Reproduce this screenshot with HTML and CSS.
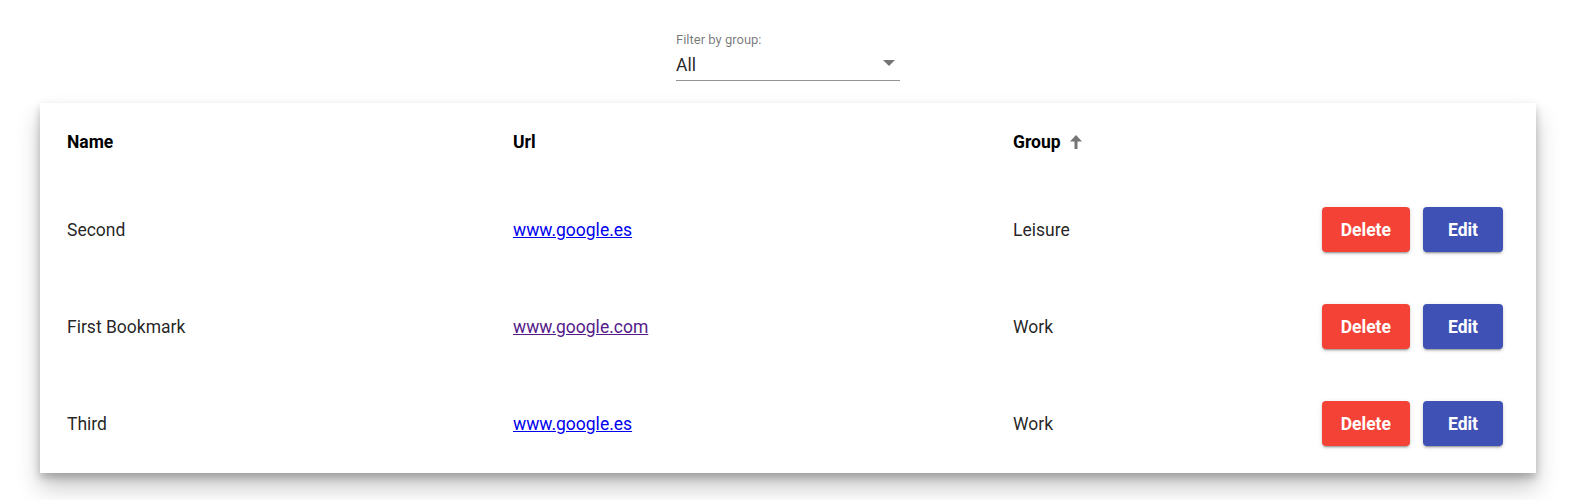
FILE: index.html
```html
<!DOCTYPE html>
<html>
<head>
<meta charset="utf-8">
<link rel="stylesheet" href="styles.css">
</head>
<body>
<div class="page">
  <div class="filter">
    <div class="filter-label">Filter by group:</div>
    <div class="filter-field">
      <span class="filter-value">All</span>
      <span class="filter-arrow"></span>
    </div>
  </div>
  <div class="card">
    <div class="row head">
      <div class="cell">Name</div>
      <div class="cell">Url</div>
      <div class="cell">Group
        <svg class="sort" viewBox="0 0 12 14" width="12" height="14"><polygon points="6,0 12,6.5 0,6.5"/><rect x="4.5" y="5" width="3" height="9"/></svg>
      </div>
      <div class="cell"></div>
    </div>
    <div class="row">
      <div class="cell">Second</div>
      <div class="cell"><a class="link" href="#">www.google.es</a></div>
      <div class="cell">Leisure</div>
      <div class="cell actions"><button class="btn del">Delete</button><button class="btn edit">Edit</button></div>
    </div>
    <div class="row">
      <div class="cell">First Bookmark</div>
      <div class="cell"><a class="link visited" href="#">www.google.com</a></div>
      <div class="cell">Work</div>
      <div class="cell actions"><button class="btn del">Delete</button><button class="btn edit">Edit</button></div>
    </div>
    <div class="row">
      <div class="cell">Third</div>
      <div class="cell"><a class="link" href="#">www.google.es</a></div>
      <div class="cell">Work</div>
      <div class="cell actions"><button class="btn del">Delete</button><button class="btn edit">Edit</button></div>
    </div>
  </div>
</div>
</body>
</html>
```
FILE: styles.css
```css
html, body {
  margin: 0;
  padding: 0;
  background: #fff;
  font-family: Roboto, "Liberation Sans", sans-serif;
}
.page {
  padding: 32px 45px 27px 40px;
  display: flex;
  flex-direction: column;
  align-items: center;
}
.filter {
  width: 224px;
  display: flex;
  flex-direction: column;
}
.filter-label {
  font-size: 13px;
  line-height: 16px;
  color: rgba(0,0,0,0.54);
}
.filter-field {
  margin-top: 6px;
  height: 26px;
  border-bottom: 1px solid rgba(0,0,0,0.42);
  display: flex;
  align-items: flex-start;
  justify-content: space-between;
}
.filter-value {
  font-size: 17.5px;
  line-height: 22px;
  color: rgba(0,0,0,0.87);
}
.filter-arrow {
  width: 0;
  height: 0;
  border-left: 6px solid transparent;
  border-right: 6px solid transparent;
  border-top: 6px solid rgba(0,0,0,0.54);
  margin: 6px 5px 0 0;
}
.card {
  align-self: stretch;
  margin-top: 22px;
  background: #fff;
  padding-bottom: 1px;
  box-shadow: 0 14px 22px rgba(0,0,0,0.22), 0 5px 8px rgba(0,0,0,0.22);
}
.row {
  display: grid;
  grid-template-columns: 446px 500px 1fr auto;
  align-items: center;
  height: 97px;
  padding: 0 33px 0 27px;
  font-size: 17.5px;
  color: rgba(0,0,0,0.87);
}
.row.head {
  height: 78px;
  font-weight: 700;
  color: #000;
}
.cell {
  display: flex;
  align-items: center;
}
.sort {
  fill: #757575;
  margin-left: 9px;
}
.link {
  color: #0000ee;
  text-decoration: underline;
}
.link.visited {
  color: #551a8b;
}
.actions {
  display: flex;
  gap: 13px;
}
.btn {
  height: 45px;
  min-width: 80px;
  padding: 0 19px;
  border: none;
  border-radius: 4px;
  color: #fff;
  font-family: Roboto, "Liberation Sans", sans-serif;
  font-size: 17.5px;
  font-weight: 700;
  box-shadow: 0 3px 1px -2px rgba(0,0,0,.2), 0 2px 2px 0 rgba(0,0,0,.14), 0 1px 5px 0 rgba(0,0,0,.12);
}
.btn.del { background: #f44336; }
.btn.edit { background: #3f51b5; }
```
